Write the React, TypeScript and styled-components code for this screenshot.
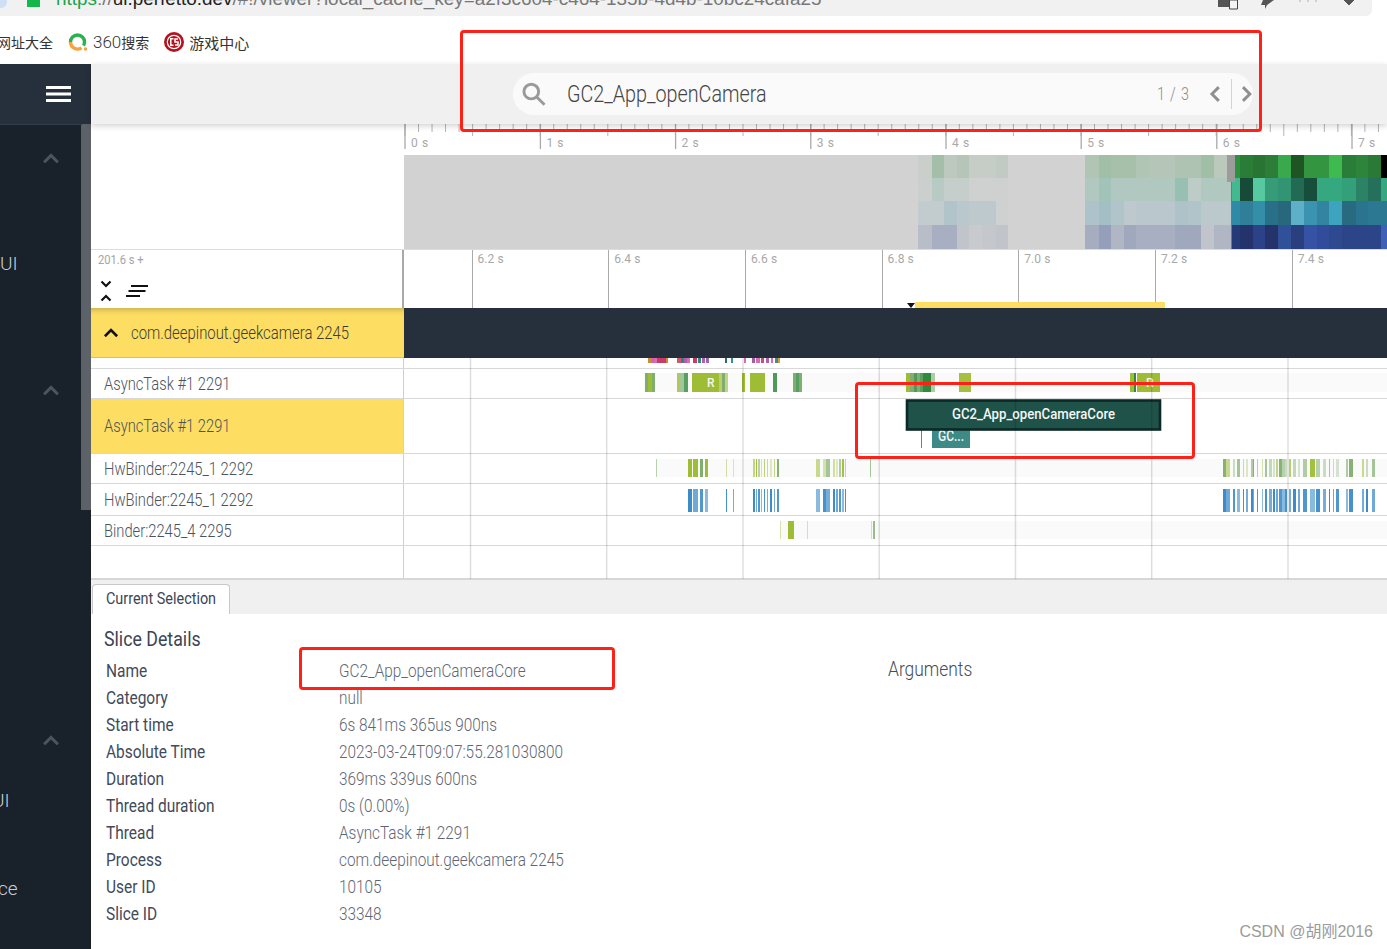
import React from "react";
import styled, { createGlobalStyle, css } from "styled-components";

const Global = createGlobalStyle`
  html, body { margin: 0; padding: 0; background: #fff; overflow: hidden; }
  * { box-sizing: border-box; }
`;

const squeezed = (k: number) => css`
  display: inline-block;
  white-space: nowrap;
  transform: scaleX(${k});
  transform-origin: left center;
`;

const Page = styled.div`
  position: relative;
  width: 1387px;
  height: 949px;
  overflow: hidden;
  display: flex;
  flex-direction: column;
  font-family: Roboto, "Noto Sans CJK SC", sans-serif;
  background: #fff;
`;

/* ---------- browser chrome ---------- */
const BrowserBar = styled.div`
  flex: none;
  width: 1372px;
  height: 16px;
  background: #f1f1f1;
  border-bottom-right-radius: 6px;
  display: flex;
  align-items: flex-start;
  overflow: hidden;
`;
const Favicon = styled.span`
  width: 8px;
  height: 8px;
  margin-left: -1px;
  border-radius: 0 0 6px 0;
  background: #cfe0f5;
`;
const LockMark = styled.span`
  width: 13px;
  height: 7px;
  margin-left: 20px;
  background: #12b84a;
`;
const UrlClip = styled.div`
  flex: none;
  display: flex;
  align-items: flex-start;
  width: 1162px;
  margin-left: 16px;
  overflow: hidden;
`;
const UrlText = styled.div`
  ${squeezed(1.05)}
  margin-top: -12px;
  font: 18px/22px "Liberation Sans", sans-serif;
  color: #777;
  b { font-weight: 400; color: #222; }
  i { font-style: normal; color: #16a34a; }
`;
const ChromeIcon = styled.span<{ $w: number }>`
  flex: none;
  width: ${(p) => p.$w}px;
  display: flex;
`;
const BookmarkBar = styled.div`
  flex: none;
  height: 48px;
  padding-top: 4px;
  display: flex;
  align-items: center;
  font: 14px "Noto Sans CJK SC", sans-serif;
  color: #333;
`;
const Bookmark = styled.span<{ $gap: number; $size?: number }>`
  margin-left: ${(p) => p.$gap}px;
  font-size: ${(p) => p.$size ?? 14}px;
  white-space: nowrap;
`;
const BookmarkDigits = styled.span`
  font: 300 17px "Roboto", sans-serif;
`;
const BookmarkIcon = styled.svg<{ $gap: number }>`
  margin-left: ${(p) => p.$gap}px;
  flex: none;
`;

/* ---------- application ---------- */
const AppFrame = styled.div`
  flex: 1;
  min-height: 0;
  display: grid;
  grid-template-columns: 91px 1fr;
`;
const Sidebar = styled.aside`
  background: #19212b;
  display: flex;
  flex-direction: column;
  position: relative;
  color: #c9ced4;
`;
const SidebarHeader = styled.div`
  height: 60px;
  background: #262f3c;
  display: flex;
  align-items: center;
  justify-content: flex-end;
  padding-right: 20px;
  box-shadow: 0 1px 0 #333c48;
`;
const SidebarBar = styled.span`
  position: absolute;
  left: 81px;
  top: 60px;
  width: 10px;
  height: 386px;
  background: #5d6269;
  border-radius: 2px 0 0 0;
`;
const SectionChevron = styled.div<{ $top: number }>`
  height: 24px;
  margin-top: ${(p) => p.$top}px;
  padding-left: 42px;
  display: flex;
  align-items: center;
`;
const SidebarItem = styled.div<{ $top: number; $left?: number }>`
  height: 24px;
  margin-top: ${(p) => p.$top}px;
  margin-left: ${(p) => p.$left ?? 0}px;
  font: 300 19px/25px Roboto, sans-serif;
`;

const Main = styled.main`
  display: flex;
  flex-direction: column;
  min-width: 0;
`;
const Topbar = styled.header`
  flex: none;
  height: 60px;
  background: #f0f0f0;
  padding: 9px 0 0 422px;
  box-shadow: 0 2px 6px rgba(0, 0, 0, 0.18);
  position: relative;
  z-index: 2;
`;
const SearchPill = styled.div`
  width: 740px;
  height: 42px;
  background: #fafafa;
  border-radius: 21px;
  display: flex;
  align-items: center;
  padding-left: 8px;
`;
const SearchText = styled.span`
  ${squeezed(0.822)}
  margin-left: 21px;
  width: 590px;
  flex: none;
  font: 300 24px/30px Roboto, sans-serif;
  color: #444;
`;
const SearchCount = styled.span`
  ${squeezed(0.8)}
  width: 52px;
  flex: none;
  font: 300 18px/24px Roboto, sans-serif;
  color: #8c8c8c;
  letter-spacing: 1px;
`;
const SearchDivider = styled.span`
  width: 1px;
  height: 30px;
  background: #d4d4d4;
  margin: 0 9px 0 10px;
`;

const OverviewRow = styled.section`
  flex: none;
  height: 126px;
  display: grid;
  grid-template-columns: 313px 1fr;
  border-bottom: 1px solid #dcdcdc;
`;
const Blank = styled.div`
  background: #fff;
`;
const Drawing = styled.svg`
  display: block;
`;
const RulerLabel = styled.text`
  font: 12px Roboto, sans-serif;
  fill: #a8a8a8;
  letter-spacing: 0.6px;
`;

const TimeHeader = styled.section`
  flex: none;
  height: 58px;
  display: grid;
  grid-template-columns: 313px 1fr;
`;
const HeaderLeft = styled.div`
  border-right: 2px solid #a9a9a9;
  padding: 3px 0 0 7px;
  display: flex;
  flex-direction: column;
`;
const OffsetLabel = styled.span`
  ${squeezed(0.93)}
  font: 12px/15px Roboto, sans-serif;
  color: #a4a4a4;
`;
const HeaderTools = styled.div`
  display: flex;
  align-items: center;
  gap: 13px;
  margin-top: 12px;
  padding-left: 2px;
`;
const HeaderScale = styled.div`
  position: relative;
  display: flex;
  padding-left: 67.5px;
  overflow: hidden;
`;
const TickCell = styled.div`
  flex: none;
  width: 136.7px;
  border-left: 1.5px solid #aaa;
  padding: 2px 0 0 5px;
  font: 12px/15px Roboto, sans-serif;
  color: #a8a8a8;
  letter-spacing: 0.1px;
`;
const Marker = styled.span`
  position: absolute;
  left: 511px;
  bottom: 0;
  width: 250px;
  height: 6px;
  background: #fddd62;
`;
const MarkerCaret = styled.span`
  position: absolute;
  left: 503px;
  bottom: 0;
  width: 0;
  height: 0;
  border-left: 4px solid transparent;
  border-right: 4px solid transparent;
  border-top: 5px solid #111;
`;

const PinnedRow = styled.section`
  flex: none;
  height: 50px;
  display: grid;
  grid-template-columns: 313px 1fr;
  background: #262f3c;
  position: relative;
  z-index: 1;
`;
const PinnedLabel = styled.div`
  background: #fddd62;
  display: flex;
  align-items: center;
  padding-left: 12px;
  gap: 12px;
  box-shadow: inset 0 7px 6px -6px rgba(0, 0, 0, 0.28);
  border-bottom: 1px solid #d9bf5d;
`;
const PinnedText = styled.span`
  ${squeezed(0.828)}
  font: 300 18px/24px Roboto, sans-serif;
  color: #3c3d33;
`;

const Tracks = styled.section`
  flex: none;
  position: relative;
  height: 222px;
  display: flex;
  flex-direction: column;
  border-bottom: 1px solid #d6d6d6;
`;
const TrackRow = styled.div<{ $h: number }>`
  flex: none;
  height: ${(p) => p.$h}px;
  display: grid;
  grid-template-columns: 313px 1fr;
  border-bottom: 1px solid #d8d8d8;
`;
const TrackLabel = styled.div<{ $selected?: boolean }>`
  background: ${(p) => (p.$selected ? "#fddd62" : "#fff")};
  border-right: 1px solid #ccd0d6;
  display: flex;
  align-items: center;
  padding-left: 13px;
  overflow: hidden;
`;
const TrackName = styled.span`
  ${squeezed(0.818)}
  font: 300 18px/24px Roboto, sans-serif;
  color: #4b5361;
`;
const GridOverlay = styled.svg`
  position: absolute;
  left: 313px;
  top: 0;
  pointer-events: none;
`;
const SliceCaption = styled.text<{ $small?: boolean }>`
  font: 500 ${(p) => (p.$small ? 12 : 14)}px Roboto, sans-serif;
  fill: #f4f6f6;
`;

const TabStrip = styled.div`
  flex: none;
  height: 34px;
  background: #f0f0f0;
  padding: 4px 0 0 1px;
  display: flex;
`;
const Tab = styled.div`
  width: 138px;
  height: 30px;
  background: #fff;
  border: 1px solid #c8c8c8;
  border-bottom: none;
  border-radius: 4px 4px 0 0;
  padding-left: 13px;
  overflow: hidden;
`;
const TabText = styled.span`
  ${squeezed(0.9)}
  font: 400 16px/27px Roboto, sans-serif;
  color: #3a4556;
`;
const Details = styled.section`
  flex: 1;
  display: flex;
  min-height: 0;
  background: #fff;
`;
const DetailsLeft = styled.div`
  flex: none;
  width: 797px;
  padding: 13px 0 0 13px;
`;
const DetailsTitle = styled.h2`
  ${squeezed(0.888)}
  margin: 0 0 6px;
  font: 400 20px/24px Roboto, sans-serif;
  color: #3a4556;
`;
const DetailRow = styled.div`
  height: 27.05px;
  display: grid;
  grid-template-columns: 233px 1fr;
  padding-left: 2px;
  align-items: center;
`;
const DetailKey = styled.span`
  ${squeezed(0.858)}
  font: 400 18px/24px Roboto, sans-serif;
  color: #3f4a5a;
`;
const DetailValue = styled.span`
  ${squeezed(0.853)}
  font: 300 18px/24px Roboto, sans-serif;
  color: #5f6773;
`;
const ArgumentsTitle = styled.h2`
  ${squeezed(0.87)}
  margin: 43px 0 0;
  height: 24px;
  font: 300 20px/24px Roboto, sans-serif;
  color: #444c58;
`;
const Watermark = styled.span`
  position: absolute;
  right: 14px;
  bottom: 7px;
  font: 16px "Liberation Sans", "Noto Sans CJK SC", sans-serif;
  color: #9b9b9b;
`;
const Annotation = styled.div<{ $x: number; $y: number; $w: number; $h: number }>`
  position: absolute;
  left: ${(p) => p.$x}px;
  top: ${(p) => p.$y}px;
  width: ${(p) => p.$w}px;
  height: ${(p) => p.$h}px;
  border: 3px solid #ff2018;
  border-radius: 4px;
  pointer-events: none;
  z-index: 5;
`;

/* ---------- drawing data ---------- */
const mix = (hex: string, t: number) => {
  const n = parseInt(hex.slice(1), 16);
  const g = 0xd2;
  const ch = (v: number) => Math.round(g + (v - g) * t);
  return `rgb(${ch((n >> 16) & 255)},${ch((n >> 8) & 255)},${ch(n & 255)})`;
};
const BASE = ["#2f8f3f", "#2fa07a", "#2f8aa8", "#2c4590"];
const ROW_Y = [155, 178, 201, 225, 249];
const FADED_A = [918, 932, 944, 957, 969, 982, 996, 1008];
const FADED_A_V = [
  [0.04, 0.28, 0.13, 0.18, 0.08, 0.08, 0.1],
  [0.04, 0.16, 0.08, 0.08, 0.02, 0.02, 0.02],
  [0.1, 0.1, 0.2, 0.15, 0.12, 0.12, 0.02],
  [0.15, 0.25, 0.25, 0.1, 0.06, 0.08, 0.1],
];
const FADED_B = [1085, 1099, 1111, 1124, 1136, 1149, 1162, 1175, 1188, 1201, 1214, 1227, 1235];
const FADED_B_V = [
  [0.2, 0.3, 0.27, 0.27, 0.2, 0.18, 0.18, 0.22, 0.22, 0.3, 0.14, 0.22],
  [0.2, 0.3, 0.2, 0.2, 0.2, 0.2, 0.2, 0.36, 0.12, 0.2, 0.2, 0.2],
  [0.22, 0.28, 0.2, 0.13, 0.15, 0.15, 0.15, 0.22, 0.2, 0.14, 0.14, 0.14],
  [0.26, 0.36, 0.2, 0.3, 0.25, 0.25, 0.25, 0.3, 0.3, 0.1, 0.2, 0.2],
];
const HOT_X = [1232, 1240, 1253, 1265, 1278, 1291, 1304, 1317, 1329, 1342, 1356, 1368, 1381, 1387];
const HOT: string[][] = [
  ["#2f9140", "#2a7d36", "#2a7433", "#2c7d38", "#3aa84c", "#1f5423", "#339540", "#339540", "#3fba50", "#2a7d38", "#2d853c", "#2a7a36", "#000000"],
  ["#43b98f", "#174a38", "#57c9a0", "#369c78", "#329472", "#226a54", "#174d3b", "#36a880", "#36a880", "#34a07a", "#2b8265", "#25705a", "#36a880"],
  ["#2f8aa8", "#2f7f98", "#338ea8", "#2a6f88", "#28687c", "#5eafc8", "#3a93b0", "#3384a0", "#3da4c0", "#286a80", "#2b7490", "#2c7892", "#2c7892"],
  ["#263a78", "#24336c", "#2c4288", "#24336a", "#31509a", "#2a3f7e", "#3652a4", "#304c9a", "#2e4990", "#2c4488", "#2c4488", "#2c4488", "#4060b8"],
];

const OVER_MAJOR = [405, 540.4, 675.6, 810.8, 946, 1081.2, 1216.8, 1352];

const Overview = () => {
  const minor: number[] = [];
  for (let i = 0; i < 74; i++) minor.push(i);
  return (
    <Drawing width={983} height={125} viewBox="404 124 983 125">
      {minor.map((i) => (
        <line key={i} x1={405 + i * 13.52} x2={405 + i * 13.52} y1={124} y2={i % 5 === 0 ? 136 : 132} stroke="#b5b5b5" strokeWidth={1} />
      ))}
      {OVER_MAJOR.map((x, i) => (
        <React.Fragment key={x}>
          <line x1={x} x2={x} y1={124} y2={149} stroke="#a9a9a9" strokeWidth={1.3} />
          <RulerLabel x={x + 6} y={147}>{`${i} s`}</RulerLabel>
        </React.Fragment>
      ))}
      <rect x={404} y={155} width={983} height={94} fill="#d2d2d2" />
      {[0, 1, 2, 3].map((r) => (
        <React.Fragment key={r}>
          {FADED_A_V[r].map((v, i) => (
            <rect key={i} x={FADED_A[i]} y={ROW_Y[r]} width={FADED_A[i + 1] - FADED_A[i]} height={ROW_Y[r + 1] - ROW_Y[r]} fill={mix(BASE[r], v)} />
          ))}
          {FADED_B_V[r].map((v, i) => (
            <rect key={i} x={FADED_B[i]} y={ROW_Y[r]} width={FADED_B[i + 1] - FADED_B[i]} height={ROW_Y[r + 1] - ROW_Y[r]} fill={mix(BASE[r], v)} />
          ))}
          {HOT[r].map((c, i) => (
            <rect key={i} x={HOT_X[i]} y={ROW_Y[r]} width={HOT_X[i + 1] - HOT_X[i] + 0.5} height={ROW_Y[r + 1] - ROW_Y[r]} fill={c} />
          ))}
        </React.Fragment>
      ))}
      <rect x={1227} y={155} width={8} height={27} fill="#9c9c9c" />
      <line x1={1231.5} x2={1231.5} y1={182} y2={249} stroke="#777" strokeWidth={1} />
    </Drawing>
  );
};

type Bar = [number, number, string?, number?];
const Slices = ({ bars, h, y = 4, bh = 19, band, children }: { bars: Bar[]; h: number; y?: number; bh?: number; band?: number; children?: React.ReactNode }) => (
  <Drawing width={983} height={h} viewBox={`404 0 983 ${h}`}>
    {band !== undefined && <rect x={band} y={y} width={1387 - band} height={bh} fill="#fafafa" />}
    {bars.map(([a, b, c, o], i) => (
      <rect key={i} x={a} y={y} width={b - a} height={bh} fill={c ?? "#9ebd35"} opacity={o ?? 1} />
    ))}
    {children}
  </Drawing>
);

const OL = "#9ebd35";
const GR = "#2f8a3c";
const SG = "#7fae6e";

const async1: Bar[] = [
  [645, 648, SG], [648, 652, OL], [652, 655, SG],
  [677, 680, OL, 0.8], [680, 684, SG, 0.7], [684, 688, GR, 0.8],
  [692, 698, OL], [698, 719, OL], [719, 722, OL, 0.7], [722, 725, SG], [725, 728, OL, 0.6],
  [742, 745, OL], [750, 765, OL], [773, 777, GR, 0.85],
  [793, 796, SG], [796, 799, GR, 0.8], [799, 802, SG],
  [906, 910, OL], [910, 914, SG], [914, 917, GR, 0.85], [917, 920, SG], [920, 923, GR, 0.8], [923, 926, GR], [926, 931, GR], [931, 935, SG, 0.6],
  [959, 971, OL, 0.95],
  [1130, 1133, OL], [1133, 1134, "#e0a030"], [1134, 1136, GR], [1137, 1139, OL], [1139, 1160, OL],
];

const hwA: [number, number][] = [
  [688, 692], [693, 698], [700, 703], [705, 708], [726, 727], [733, 734],
  [753, 755], [756, 757], [758, 760], [761, 762], [764, 765], [767, 768], [770, 772], [774, 775], [777, 779],
  [816, 820], [823, 826], [826, 830], [833, 835], [836, 838], [839, 841], [842, 844], [845, 846],
];
const hwB: [number, number][] = [
  [1223, 1226], [1226, 1230], [1233, 1235], [1237, 1240], [1243, 1244], [1246, 1248], [1251, 1253], [1253, 1254], [1257, 1258], [1262, 1263],
  [1265, 1267], [1269, 1272], [1273, 1275], [1276, 1278], [1279, 1282], [1282, 1285], [1285, 1287], [1289, 1291], [1293, 1296], [1298, 1300], [1303, 1307],
  [1310, 1315], [1316, 1320], [1323, 1326], [1329, 1330], [1333, 1334], [1336, 1339], [1346, 1348], [1349, 1353], [1362, 1364], [1366, 1368], [1372, 1375],
];
const GREEN_OP = [0.95, 0.55, 0.4, 0.7, 0.45, 0.3, 0.6];
const green: Bar[] = [
  [656, 657, SG, 0.55],
  ...hwA.map(([a, b], i): Bar => [a, b, i % 3 === 2 ? SG : OL, i < 4 ? 1 : GREEN_OP[i % 7]]),
  [870, 871, SG, 0.7],
  ...hwB.map(([a, b], i): Bar => [a, b, i % 4 === 1 ? OL : SG, GREEN_OP[i % 7]]),
];
const BLUE_OP = [1, 0.75, 0.9, 0.6, 0.95, 0.7];
const blue: Bar[] = [
  ...hwA.map(([a, b], i): Bar => [a, b, "#3d8cc9", BLUE_OP[i % 6]]),
  ...hwB.map(([a, b], i): Bar => [a, b, "#3d8cc9", BLUE_OP[i % 6]]),
];
const binder: Bar[] = [
  [780, 781, OL, 0.4], [788, 794, OL], [807, 808, OL, 0.4], [871, 872, OL, 0.4], [873, 875, SG, 0.8],
];
const top: Bar[] = [
  [648, 652, "#c98a3e"], [652, 654, "#d65fa8"], [654, 657, "#d96bb5"], [657, 662, "#c93a64"], [662, 666, "#c93a64"], [666, 668, "#c98a3e"],
  [677, 681, "#cf5a70"], [681, 684, "#3a7f7a"], [684, 687, "#b060b0"], [687, 690, "#d96bb5"], [693, 697, "#c93a64"], [698, 701, "#2f8a7a"], [702, 705, "#b060b0"], [706, 709, "#9a6ab0"],
  [725, 727, "#2f6a6a"], [731, 733, "#3a8f8a"], [744, 746, "#d96bb5"],
  [752, 755, "#a060a0"], [756, 760, "#d96bb5"], [761, 764, "#c0507a"], [766, 769, "#b060b0"], [771, 773, "#d96bb5"], [775, 778, "#3a8f8a"], [778, 780, "#d9a030"],
];

const TICKS = ["6.2 s", "6.4 s", "6.6 s", "6.8 s", "7.0 s", "7.2 s", "7.4 s"];
const GRID = [470.5, 606.7, 743, 879.2, 1015.5, 1151.7, 1288];
const DETAILS: [string, string][] = [
  ["Name", "GC2_App_openCameraCore"],
  ["Category", "null"],
  ["Start time", "6s 841ms 365us 900ns"],
  ["Absolute Time", "2023-03-24T09:07:55.281030800"],
  ["Duration", "369ms 339us 600ns"],
  ["Thread duration", "0s (0.00%)"],
  ["Thread", "AsyncTask #1 2291"],
  ["Process", "com.deepinout.geekcamera 2245"],
  ["User ID", "10105"],
  ["Slice ID", "33348"],
];

const ChevronUp = ({ color, w = 18, sw = 3 }: { color: string; w?: number; sw?: number }) => (
  <svg width={w} height={w * 0.6} viewBox="0 0 18 11" fill="none">
    <path d="M2 9.5 L9 2.5 L16 9.5" stroke={color} strokeWidth={sw} />
  </svg>
);

export default function App() {
  return (
    <Page>
      <Global />
      <BrowserBar>
        <Favicon />
        <LockMark />
        <UrlClip>
          <UrlText>
            <i>https</i>://<b>ui.perfetto.dev</b>/#!/viewer?local_cache_key=a2f3c604-c464-135b-4d4b-10bc24cafa25
          </UrlText>
        </UrlClip>
        <ChromeIcon $w={43}>
          <svg width="21" height="10" viewBox="0 0 21 10"><path d="M0 0h13v7H0z" fill="#555" /><path d="M11.5 0h8v9h-8z" fill="#f4f4f4" stroke="#444" /></svg>
        </ChromeIcon>
        <ChromeIcon $w={36}>
          <svg width="13" height="9" viewBox="0 0 13 9"><path d="M2 0h11L6 5 4 9V5H0z" fill="#555" /></svg>
        </ChromeIcon>
        <ChromeIcon $w={46}>
          <svg width="22" height="4" viewBox="0 0 22 4"><g fill="#c4c4c4"><circle cx="3" cy="1" r="1" /><circle cx="11" cy="1" r="1" /><circle cx="19" cy="1" r="1" /></g></svg>
        </ChromeIcon>
        <ChromeIcon $w={12}>
          <svg width="12" height="6" viewBox="0 0 12 6"><path d="M1 0l5 5 5-5z" fill="#555" stroke="#555" /></svg>
        </ChromeIcon>
      </BrowserBar>
      <BookmarkBar>
        <Bookmark $gap={-3}>网址大全</Bookmark>
        <BookmarkIcon $gap={15} width="20" height="20" viewBox="0 0 20 20" fill="none">
          <path d="M2.5 10a7 7 0 0 1 14 0" stroke="#2bb24c" strokeWidth="3.4" />
          <path d="M2.5 10a7 7 0 0 0 11 5.8" stroke="#f5a33a" strokeWidth="3.4" />
          <path d="M16.5 10a7 7 0 0 1-1 3.6" stroke="#2bb24c" strokeWidth="3.4" />
          <circle cx="17.5" cy="17" r="1.7" fill="#f5a33a" />
        </BookmarkIcon>
        <Bookmark $gap={5}><BookmarkDigits>360</BookmarkDigits>搜索</Bookmark>
        <BookmarkIcon $gap={15} width="20" height="20" viewBox="0 0 20 20" fill="none">
          <circle cx="10" cy="10" r="10" fill="#b5121f" />
          <circle cx="10" cy="10" r="6.7" stroke="#fff" strokeWidth="1.2" />
          <path d="M9.5 6.8H6.8v6.4h2.7M14 7h-3v3h3v3h-3" stroke="#fff" strokeWidth="1.5" />
        </BookmarkIcon>
        <Bookmark $gap={5} $size={15}>游戏中心</Bookmark>
      </BookmarkBar>
      <AppFrame>
        <Sidebar>
          <SidebarHeader>
            <svg width="25" height="18" viewBox="0 0 25 18"><g fill="#fff"><rect y="1" width="25" height="3" /><rect y="7.5" width="25" height="3" /><rect y="14" width="25" height="3" /></g></svg>
          </SidebarHeader>
          <SidebarBar />
          <SectionChevron $top={22}><ChevronUp color="#4b5460" /></SectionChevron>
          <SidebarItem $top={81}>UI</SidebarItem>
          <SectionChevron $top={103}><ChevronUp color="#4b5460" /></SectionChevron>
          <SectionChevron $top={326}><ChevronUp color="#4b5460" /></SectionChevron>
          <SidebarItem $top={36} $left={-8}>UI</SidebarItem>
          <SidebarItem $top={64} $left={-2}>ce</SidebarItem>
        </Sidebar>
        <Main>
          <Topbar>
            <SearchPill>
              <svg width="26" height="26" viewBox="0 0 26 26" fill="none" stroke="#9a9a9a" strokeWidth="3">
                <circle cx="10.5" cy="10.5" r="7.5" />
                <path d="M16 16l8 8" />
              </svg>
              <SearchText>GC2_App_openCamera</SearchText>
              <SearchCount>1 / 3</SearchCount>
              <svg width="12" height="18" viewBox="0 0 12 18" fill="none"><path d="M10 2L3 9l7 7" stroke="#8f8f8f" strokeWidth="3" /></svg>
              <SearchDivider />
              <svg width="12" height="18" viewBox="0 0 12 18" fill="none"><path d="M2 2l7 7-7 7" stroke="#8f8f8f" strokeWidth="3" /></svg>
            </SearchPill>
          </Topbar>
          <OverviewRow>
            <Blank />
            <Overview />
          </OverviewRow>
          <TimeHeader>
            <HeaderLeft>
              <OffsetLabel>201.6 s +</OffsetLabel>
              <HeaderTools>
                <svg width="12" height="22" viewBox="0 0 12 22" fill="none" stroke="#111" strokeWidth="2.2">
                  <path d="M1.5 1.5L6 6l4.5-4.5M1.5 20.5L6 16l4.5 4.5" />
                </svg>
                <svg width="24" height="14" viewBox="0 0 24 14" fill="none" stroke="#111" strokeWidth="2">
                  <path d="M6 2h17M3.5 7h17M1 12h14" />
                </svg>
              </HeaderTools>
            </HeaderLeft>
            <HeaderScale>
              {TICKS.map((t) => (
                <TickCell key={t}>{t}</TickCell>
              ))}
              <Marker />
              <MarkerCaret />
            </HeaderScale>
          </TimeHeader>
          <PinnedRow>
            <PinnedLabel>
              <ChevronUp color="#111" w={16} />
              <PinnedText>com.deepinout.geekcamera 2245</PinnedText>
            </PinnedLabel>
          </PinnedRow>
          <Tracks>
            <TrackRow $h={11}>
              <TrackLabel />
              <Slices bars={top} h={10} y={0} bh={5} />
            </TrackRow>
            <TrackRow $h={30}>
              <TrackLabel><TrackName>AsyncTask #1 2291</TrackName></TrackLabel>
              <Slices bars={async1} h={29} y={4} bh={19} band={644}>
                <SliceCaption $small x={707} y={18}>R</SliceCaption>
                <SliceCaption $small x={1146} y={18}>R</SliceCaption>
              </Slices>
            </TrackRow>
            <TrackRow $h={55}>
              <TrackLabel $selected><TrackName>AsyncTask #1 2291</TrackName></TrackLabel>
              <Drawing width={983} height={54} viewBox="404 0 983 54">
                <rect x={921} y={30} width={1} height={19} fill="#3d8cc9" />
                <rect x={932} y={29} width={38} height={20} fill="#3e8a86" />
                <SliceCaption x={938} y={42} textLength={26} lengthAdjust="spacingAndGlyphs">GC...</SliceCaption>
                <rect x={907} y={1.5} width={253} height={29} fill="#1f5249" stroke="#0b2a26" strokeWidth={2.6} />
                <SliceCaption x={952} y={20} textLength={163} lengthAdjust="spacingAndGlyphs">GC2_App_openCameraCore</SliceCaption>
              </Drawing>
            </TrackRow>
            <TrackRow $h={30}>
              <TrackLabel><TrackName>HwBinder:2245_1 2292</TrackName></TrackLabel>
              <Slices bars={green} h={29} y={5} bh={18} band={656} />
            </TrackRow>
            <TrackRow $h={32}>
              <TrackLabel><TrackName>HwBinder:2245_1 2292</TrackName></TrackLabel>
              <Slices bars={blue} h={31} y={5} bh={23} />
            </TrackRow>
            <TrackRow $h={30}>
              <TrackLabel><TrackName>Binder:2245_4 2295</TrackName></TrackLabel>
              <Slices bars={binder} h={29} y={5} bh={18} band={780} />
            </TrackRow>
            <TrackRow $h={33}>
              <TrackLabel />
              <Blank />
            </TrackRow>
            <GridOverlay width={983} height={221} viewBox="404 0 983 221">
              {GRID.map((x) => (
                <line key={x} x1={x} x2={x} y1={0} y2={221} stroke="rgba(0,0,0,0.13)" strokeWidth={1.5} />
              ))}
            </GridOverlay>
          </Tracks>
          <TabStrip>
            <Tab><TabText>Current Selection</TabText></Tab>
          </TabStrip>
          <Details>
            <DetailsLeft>
              <DetailsTitle>Slice Details</DetailsTitle>
              {DETAILS.map(([k, v]) => (
                <DetailRow key={k}>
                  <DetailKey>{k}</DetailKey>
                  <DetailValue>{v}</DetailValue>
                </DetailRow>
              ))}
            </DetailsLeft>
            <ArgumentsTitle>Arguments</ArgumentsTitle>
          </Details>
        </Main>
      </AppFrame>
      <Watermark>CSDN @胡刚2016</Watermark>
      <Annotation $x={460} $y={30} $w={802} $h={102} />
      <Annotation $x={855} $y={382} $w={340} $h={77} />
      <Annotation $x={299} $y={647} $w={316} $h={43} />
    </Page>
  );
}
